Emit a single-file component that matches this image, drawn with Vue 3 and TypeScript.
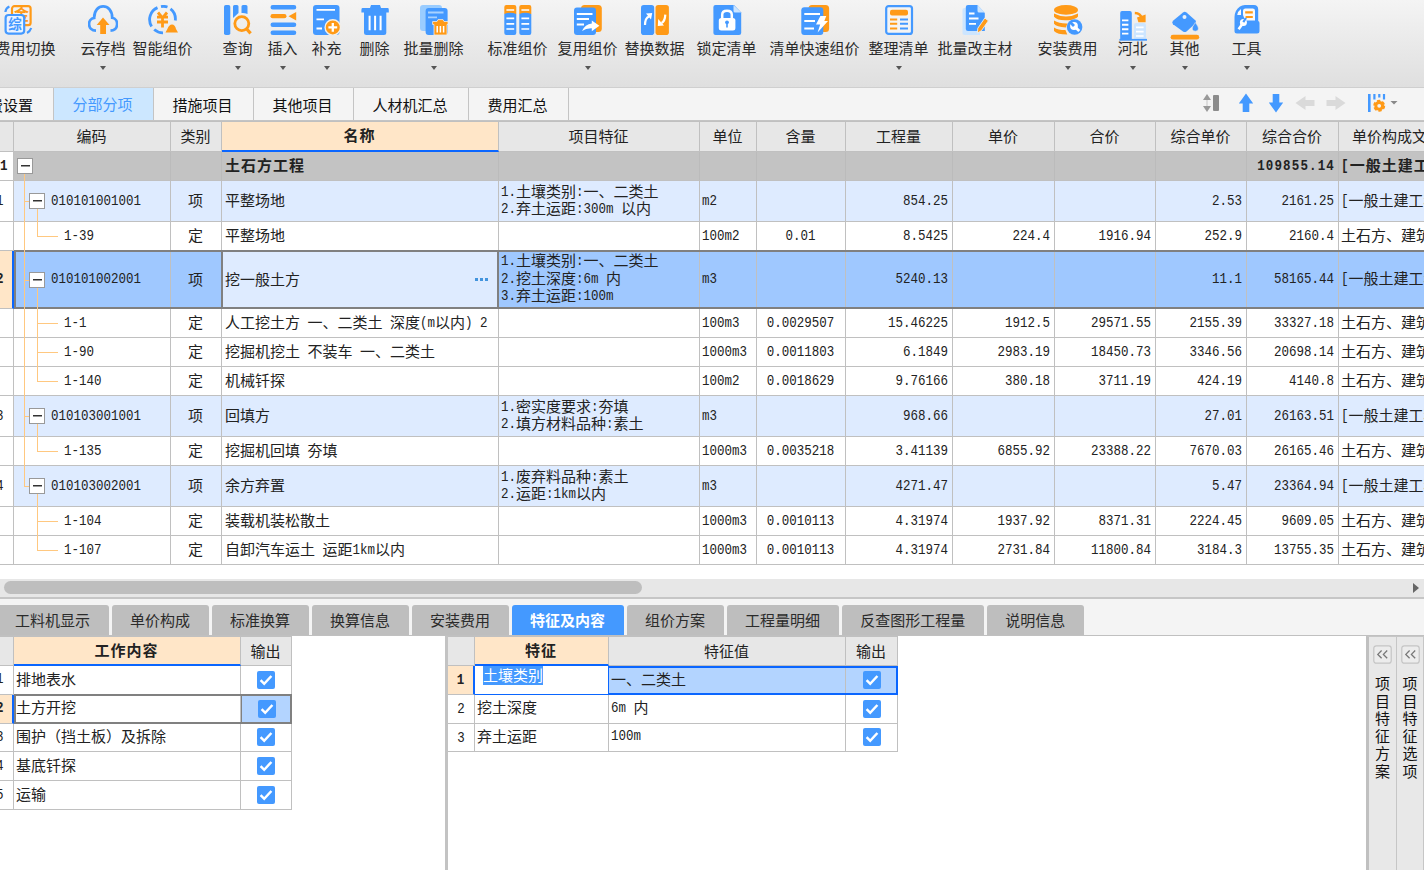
<script setup lang="ts">
import { h } from 'vue'

interface Tool { id: string; label: string; menu?: boolean }
interface Row {
  kind: 'section' | 'item' | 'quota'
  no?: string
  code?: string
  type?: string
  name: string
  feature?: string
  unit?: string
  nums: string[]
  file: string
  lastChild?: boolean
  lastGroup?: boolean
  selected?: boolean
}

/* Half-width characters take exactly half of a full-width cell. */
const Mixed = (props: { text: string }) =>
  h('span', { class: 'mixed' }, (props.text.match(/[\x20-\x7e]+|[^\x20-\x7e]+/g) ?? []).map((t) =>
    h('span', { class: /^[\x20-\x7e]/.test(t) ? 'half' : 'full' }, t),
  ))
Mixed.props = ['text']

const tools: Tool[] = [
  { id: 'fee', label: '费用切换' },
  { id: 'cloud', label: '云存档', menu: true },
  { id: 'smart', label: '智能组价' },
  { id: 'query', label: '查询', menu: true },
  { id: 'insert', label: '插入', menu: true },
  { id: 'supply', label: '补充', menu: true },
  { id: 'delete', label: '删除' },
  { id: 'batchdel', label: '批量删除', menu: true },
  { id: 'standard', label: '标准组价' },
  { id: 'reuse', label: '复用组价', menu: true },
  { id: 'replace', label: '替换数据' },
  { id: 'lock', label: '锁定清单' },
  { id: 'quick', label: '清单快速组价' },
  { id: 'arrange', label: '整理清单', menu: true },
  { id: 'material', label: '批量改主材' },
  { id: 'install', label: '安装费用', menu: true },
  { id: 'region', label: '河北', menu: true },
  { id: 'other', label: '其他', menu: true },
  { id: 'toolbox', label: '工具', menu: true },
]

const tabs = ['取费设置', '分部分项', '措施项目', '其他项目', '人材机汇总', '费用汇总']
const heads = ['', '编码', '类别', '名称', '项目特征', '单位', '含量', '工程量', '单价', '合价', '综合单价', '综合合价', '单价构成文件']

const civil = '[一般土建工程]'
const earth = '土石方、建筑工程'
const rows: Row[] = [
  { kind: 'section', no: '1', name: '土石方工程', nums: ['', '', '', '', '', '109855.14'], file: civil },
  { kind: 'item', no: '1', code: '010101001001', type: '项', name: '平整场地', feature: '1.土壤类别:一、二类土\n2.弃土运距:300m 以内', unit: 'm2', nums: ['', '854.25', '', '', '2.53', '2161.25'], file: civil },
  { kind: 'quota', code: '1-39', type: '定', name: '平整场地', unit: '100m2', nums: ['0.01', '8.5425', '224.4', '1916.94', '252.9', '2160.4'], file: earth, lastChild: true },
  { kind: 'item', no: '2', code: '010101002001', type: '项', name: '挖一般土方', feature: '1.土壤类别:一、二类土\n2.挖土深度:6m 内\n3.弃土运距:100m', unit: 'm3', nums: ['', '5240.13', '', '', '11.1', '58165.44'], file: civil, selected: true },
  { kind: 'quota', code: '1-1', type: '定', name: '人工挖土方 一、二类土 深度(m以内) 2', unit: '100m3', nums: ['0.0029507', '15.46225', '1912.5', '29571.55', '2155.39', '33327.18'], file: earth },
  { kind: 'quota', code: '1-90', type: '定', name: '挖掘机挖土 不装车 一、二类土', unit: '1000m3', nums: ['0.0011803', '6.1849', '2983.19', '18450.73', '3346.56', '20698.14'], file: earth },
  { kind: 'quota', code: '1-140', type: '定', name: '机械钎探', unit: '100m2', nums: ['0.0018629', '9.76166', '380.18', '3711.19', '424.19', '4140.8'], file: earth, lastChild: true },
  { kind: 'item', no: '3', code: '010103001001', type: '项', name: '回填方', feature: '1.密实度要求:夯填\n2.填方材料品种:素土', unit: 'm3', nums: ['', '968.66', '', '', '27.01', '26163.51'], file: civil },
  { kind: 'quota', code: '1-135', type: '定', name: '挖掘机回填 夯填', unit: '1000m3', nums: ['0.0035218', '3.41139', '6855.92', '23388.22', '7670.03', '26165.46'], file: earth, lastChild: true },
  { kind: 'item', no: '4', code: '010103002001', type: '项', name: '余方弃置', feature: '1.废弃料品种:素土\n2.运距:1km以内', unit: 'm3', nums: ['', '4271.47', '', '', '5.47', '23364.94'], file: civil, lastGroup: true },
  { kind: 'quota', code: '1-104', type: '定', name: '装载机装松散土', unit: '1000m3', nums: ['0.0010113', '4.31974', '1937.92', '8371.31', '2224.45', '9609.05'], file: earth, lastGroup: true },
  { kind: 'quota', code: '1-107', type: '定', name: '自卸汽车运土 运距1km以内', unit: '1000m3', nums: ['0.0010113', '4.31974', '2731.84', '11800.84', '3184.3', '13755.35'], file: earth, lastChild: true, lastGroup: true },
]

const detailTabs = ['工料机显示', '单价构成', '标准换算', '换算信息', '安装费用', '特征及内容', '组价方案', '工程量明细', '反查图形工程量', '说明信息']
const works = ['排地表水', '土方开挖', '围护（挡土板）及拆除', '基底钎探', '运输']
const features = [
  { name: '土壤类别', value: '一、二类土' },
  { name: '挖土深度', value: '6m 内' },
  { name: '弃土运距', value: '100m' },
]
const sidePanels = ['项目特征方案', '项目特征选项']
</script>

<template>
  <div class="app">
    <header class="toolbar">
      <div v-for="t in tools" :key="t.id" class="tool" :class="t.id">
        <svg class="icon" width="30" height="30" viewBox="0 0 30 30" fill="none">
          <g v-if="t.id === 'fee'">
            <rect x="9" y="1.2" width="18.6" height="19" rx="2.5" stroke="#ff9a17" stroke-width="2.2" />
            <text x="11" y="14.6" font-size="15" fill="#ff9a17" class="glyph">金</text>
            <rect x="2.6" y="10" width="18.6" height="18.6" rx="3" fill="#eaf3ff" stroke="#4499ff" stroke-width="2.2" />
            <text x="5.2" y="24" font-size="13.5" fill="#4499ff" class="glyph">综</text>
            <path d="M2.4 7Q2.8 3 6.4 1.4M24 28Q27 26.5 28.2 23" stroke="#4499ff" stroke-width="2.2" />
          </g>
          <g v-else-if="t.id === 'cloud'">
            <path d="M8 25.7C-.9 25.5-.9 13.8 6.2 12.8C6-2.4 24.3-2.4 24.2 12.8C31 14.2 31 25 22.5 25.7" stroke="#4499ff" stroke-width="2.7" />
            <path d="M15 12.5L21.5 20H18V29H12.2V20H8.7Z" fill="#ff9a17" />
          </g>
          <g v-else-if="t.id === 'smart'">
            <path d="M9.5 2.6A13 13 0 0 0 3.6 21.4M13 1.6A13 13 0 0 1 19.5 2M22.5 3.8A13 13 0 0 1 27.3 15.5M6.2 24.5A13 13 0 0 0 15 27.8" stroke="#4499ff" stroke-width="2.8" />
            <path d="M10 7.5L14.5 13L19 7.5M9 12.2H20M9 17H20M14.5 12V22.5" stroke="#ff9a17" stroke-width="2.8" />
            <path d="M17.5 27.5L19.4 24Q21 19.5 24 19.5T28 24L30 27.5Z" fill="#ff9a17" />
          </g>
          <g v-else-if="t.id === 'query'">
            <rect x="1" y="0" width="6.3" height="30" rx="1.8" fill="#4499ff" />
            <path d="M10 1.5Q10 0 11.5 0H14Q15.5 0 15.5 1.5V8L10 13ZM18.5 1.5Q18.5 0 20 0H23Q24.5 0 24.5 1.5V9Q21 7.5 18.5 8Z" fill="#4499ff" />
            <circle cx="18.8" cy="18.6" r="7" stroke="#ff9a17" stroke-width="2.8" />
            <path d="M23.5 23.8L27.6 28.4" stroke="#ff9a17" stroke-width="3.2" />
          </g>
          <g v-else-if="t.id === 'insert'">
            <path d="M4.8 2.3H26M4.8 19.8H26M4.8 27.7H26" stroke="#4499ff" stroke-width="4.6" stroke-linecap="round" />
            <path d="M4.6 11.2H16.4" stroke="#ff9a17" stroke-width="4.2" stroke-linecap="round" />
            <path d="M20.5 11.2L28.2 7V15.4Z" fill="#ff9a17" />
          </g>
          <g v-else-if="t.id === 'supply'">
            <rect x="1" y="0" width="26.5" height="30" rx="3" fill="#4499ff" />
            <path d="M4.5 4.8H23M4.5 14.4H12M4.5 23.5H10" stroke="#fff" stroke-width="1.8" />
            <circle cx="20.8" cy="22.4" r="7.7" fill="#ff9a17" stroke="#f3efe8" stroke-width="1.4" />
            <path d="M20.8 18V26.8M16.4 22.4H25.2" stroke="#fff" stroke-width="2.3" />
          </g>
          <g v-else-if="t.id === 'delete'">
            <path d="M10 3L11 0H20L21 3H28Q28.8 3 28.8 5V7.4H26.3V28Q26.3 30 24 30H6.4Q4 30 4 28V7.4H1.4V5Q1.4 3 2.4 3Z" fill="#4499ff" />
            <path d="M9.6 10.8V25.2M15.1 10.8V25.2M20.6 10.8V25.2" stroke="#fff" stroke-width="2" />
          </g>
          <g v-else-if="t.id === 'batchdel'">
            <rect x="1" y="0" width="22" height="26" rx="3" fill="#99ccff" />
            <rect x="6.6" y="3" width="22" height="27" rx="3" fill="#4499ff" />
            <path d="M9 7.5H24.5M9 12.3H18" stroke="#a8d2ff" stroke-width="1.8" />
            <path d="M13.6 19.5V16.5H18L19 14.6H24L25 16.5H29V19.5H28V30H15V19.5Z" fill="#ff9a17" stroke="#eee" stroke-width=".8" />
            <path d="M18.2 21V27.5M21.4 21V27.5M24.6 21V27.5" stroke="#fff" stroke-width="1.5" />
          </g>
          <g v-else-if="t.id === 'standard'">
            <path d="M1.3 9V2Q1.3 0 3.3 0H11.3Q13.3 0 13.3 2V9ZM16.3 9V2Q16.3 0 18.3 0H26.3Q28.3 0 28.3 2V9Z" fill="#ff9a17" />
            <path d="M1.3 9Q7 6.6 13.3 9V28Q13.3 30 11.3 30H3.3Q1.3 30 1.3 28ZM16.3 9Q22 6.6 28.3 9V28Q28.3 30 26.3 30H18.3Q16.3 30 16.3 28Z" fill="#4499ff" />
            <path d="M3.4 5H11.2M18.4 5H26.2M3.4 13.4H11.2M3.4 18.8H11.2M3.4 24H11.2M18.4 13.4H26.2M18.4 18.8H26.2M18.4 24H26.2" stroke="#fff" stroke-width="1.7" />
          </g>
          <g v-else-if="t.id === 'reuse'">
            <rect x="8" y="0" width="20.8" height="27" rx="3.5" fill="#ff9a17" />
            <rect x="1" y="2.6" width="22" height="27.4" rx="3" fill="#4499ff" />
            <path d="M3.8 9H19.5M3.8 14H16M3.8 19.5H11" stroke="#fff" stroke-width="1.8" />
            <path d="M9 26Q12 19 18.8 18.4V15.4L26.4 20.8L18.8 26.2V23.2Q13 23 9 26Z" fill="#fff" />
          </g>
          <g v-else-if="t.id === 'replace'">
            <rect x="1" y="0" width="13.2" height="30" rx="2.8" fill="#4499ff" />
            <rect x="15.5" y="0" width="13.4" height="30" rx="2.8" fill="#ff9a17" />
            <path d="M5 20Q5 13 9 11.4M25.3 9.6Q25 16.4 21.5 18" stroke="#fff" stroke-width="2.2" />
            <path d="M6 8.6L12.2 8L11 14.6ZM18.2 14L24 20.4L17.8 21Z" fill="#fff" />
          </g>
          <g v-else-if="t.id === 'lock'">
            <path d="M3.5 0H22L29.2 7.5V28Q29.2 30 27 30H3.5Q1.4 30 1.4 28V2Q1.4 0 3.5 0Z" fill="#4499ff" />
            <path d="M21.5 0L29.2 7.5H23Q21.5 7.5 21.5 6Z" fill="#cce5ff" />
            <rect x="6.8" y="13" width="16.6" height="12.5" rx="2.5" fill="#fff" />
            <path d="M10.2 13.5V9.8Q10.2 5.7 15 5.7T19.8 9.8V13.5" stroke="#fff" stroke-width="2.5" />
            <circle cx="15" cy="17.3" r="1.9" fill="#4499ff" />
            <path d="M15 17V22.4" stroke="#4499ff" stroke-width="1.6" />
          </g>
          <g v-else-if="t.id === 'quick'">
            <rect x="8.5" y="0" width="20.6" height="27" rx="3.5" fill="#ff9a17" />
            <rect x="1.3" y="2.2" width="22" height="27.8" rx="3" fill="#4499ff" />
            <path d="M4.3 9H20M4.3 16H15M4.3 23.5H14" stroke="#fff" stroke-width="1.9" />
            <path d="M20.4 11H26.3L24.3 16H28L17.6 27.5L20.2 19.6H16Z" fill="#fff" />
          </g>
          <g v-else-if="t.id === 'arrange'">
            <rect x="2.2" y="1.1" width="25.8" height="27.8" rx="2.5" fill="#f4f4f4" stroke="#4499ff" stroke-width="2.2" />
            <rect x="6" y="4.8" width="18" height="5.6" rx="2" fill="#ff9a17" />
            <path d="M6 14.4H13.2M6 18.8H13.2M6 23.6H13.2" stroke="#ff9a17" stroke-width="2" />
            <path d="M16 14.4H24M16 18.8H24M16 23.6H24" stroke="#4499ff" stroke-width="2" />
          </g>
          <g v-else-if="t.id === 'material'">
            <path d="M4.5 3H20V30H4.5Q2.5 30 2.5 28V5Q2.5 3 4.5 3Z" fill="#cce5ff" />
            <path d="M8 0H17.5L24.8 8V26H8Q5.8 26 5.8 24V2Q5.8 0 8 0Z" fill="#4499ff" />
            <path d="M17.5 0L24.8 7.5H19Q17.5 7.5 17.5 6Z" fill="#cce5ff" />
            <path d="M9 8.5H14.5M9 13.5H18.5M9 18.8H16" stroke="#fff" stroke-width="1.8" />
            <path d="M24.8 13L28.4 15.8L21.4 25.7L17.4 28L17.8 23.2Z" fill="#ff9a17" stroke="#e9f0f7" stroke-width=".9" />
          </g>
          <g v-else-if="t.id === 'install'">
            <ellipse cx="13" cy="4.9" rx="12" ry="4.9" fill="#ff9a17" />
            <path d="M1 8.4Q13 14.6 25 8.4V11.5Q23 14 18 14.9Q5 16.5 1 11.7ZM1 15.4Q6 18.6 14.5 18.4L12.8 22.4Q3.5 22 1 18.7ZM1 22.4Q5 25 12.4 25L14.3 29.6Q4 29.5 1 26Z" fill="#ff9a17" />
            <circle cx="21.6" cy="22" r="7.8" fill="#4499ff" />
            <circle cx="21" cy="21" r="3.9" fill="#fff" />
            <path d="M21.5 21.5L26.3 26" stroke="#fff" stroke-width="2.8" />
            <path d="M17.5 17.5L21 21" stroke="#4499ff" stroke-width="2.8" />
          </g>
          <g v-else-if="t.id === 'region'">
            <path d="M4 0H11.8Q13.8 0 13.8 2V28H2.2V2Q2.2 0 4 0Z" fill="#4499ff" />
            <path d="M4 9.4H10.4M4 13.8H10.4M4 18.2H10.4M4 22.6H10.4" stroke="#fff" stroke-width="1.9" />
            <path d="M18 12H26Q28 12 28 14V28H16V14Q16 12 18 12Z" fill="#cce5ff" />
            <path d="M18 16.4H25.6M18 20.6H25.6M18 25H25.6" stroke="#fff" stroke-width="1.6" />
            <path d="M1.4 28.8H29" stroke="#4499ff" stroke-width="1.8" />
            <path d="M16.8 2Q22.6 2.2 23.4 7" stroke="#ff9a17" stroke-width="2.6" />
            <path d="M19 6.4L27.6 3.4V11.2H20.4Z" fill="#ff9a17" />
          </g>
          <g v-else-if="t.id === 'other'">
            <path d="M3 9.8L13 1.4Q14.8.2 16.5 1.6L25.5 9.6Q26.6 11 25.4 12.4L16.5 20.4Q14.8 21.6 13 20.4L3 13.2Q1.4 11.5 3 9.8Z" fill="#4499ff" />
            <circle cx="14.5" cy="6" r="2" fill="#e8f1fb" />
            <path d="M25.3 11.5Q28.9 16.2 28.3 18.2Q27.7 20.2 25.3 20.2T22.3 18.2Q21.8 16 25.3 11.5Z" fill="#4499ff" stroke="#e8e8e8" stroke-width=".6" />
            <path d="M3 26.2H26.8" stroke="#ff9a17" stroke-width="4.8" stroke-linecap="round" />
          </g>
          <g v-else>
            <path d="M8 1.5Q10 0 13 0H22Q26.2 0 26.2 4.5V16Q27.5 16.5 27.5 18V26Q27.5 28.5 25 28.5H5Q2.5 28.5 2.5 26V12Q2.8 5 8 1.5Z" fill="#4499ff" />
            <path d="M5.2 10Q6 6 9 4V10ZM11 10V6Q11 3.4 13.5 3.4H20.6Q23 3.4 23 5.8V15.6H13.2Z" fill="#fafafa" />
            <path d="M13.2 7.4H20.8M13.6 12H20.8" stroke="#ff9a17" stroke-width="2.2" />
            <circle cx="11.4" cy="17.6" r="3.5" fill="#fff" />
            <path d="M10.7 18.6L6.6 24.3" stroke="#fff" stroke-width="2.6" />
            <path d="M14 13L11.3 17.2" stroke="#4499ff" stroke-width="2.2" />
          </g>
        </svg>
        <span class="label">{{ t.label }}</span>
        <i v-if="t.menu" class="caret" />
      </div>
    </header>

    <nav class="tabs">
      <span v-for="(t, i) in tabs" :key="t" class="tab" :class="{ active: i === 1 }">{{ t }}</span>
      <svg class="row-tools" width="200" height="22" viewBox="0 0 200 22" fill="none">
        <path d="M1 8L5 2L9 8ZM1 14L5 20L9 14Z" fill="#999" />
        <path d="M5 8V14" stroke="#ddd" stroke-width="2" />
        <rect x="11" y="3" width="6" height="16" rx="1" fill="#8c8c8c" />
        <path d="M44 1.5L51.2 11.5H47.3V20H40.7V11.5H36.8ZM74 20.5L81.2 10.5H77.3V2H70.7V10.5H66.8Z" fill="#4499ff" />
        <path d="M93.5 11L103.5 4V8H112.5V14H103.5V18ZM143.5 11L133.5 4V8H124.5V14H133.5V18Z" fill="#dadada" />
        <rect x="166" y="2" width="2.6" height="18" fill="#4499ff" />
        <path d="M172.4 2V7.5M177.3 2V5.5M182 2V7.5" stroke="#4499ff" stroke-width="2.2" />
        <circle cx="177.2" cy="13.8" r="3.4" stroke="#ff9a17" stroke-width="3" />
        <circle cx="177.2" cy="13.8" r="5" stroke="#ff9a17" stroke-width="2" stroke-dasharray="3.2 2" />
        <path d="M188.5 9H195.5L192 12.6Z" fill="#888" />
      </svg>
    </nav>

    <section class="sheet">
      <div class="line head">
        <div v-for="(t, i) in heads" :key="i" class="cell" :class="{ current: i === 3, clip: i === 12 }">{{ t }}</div>
      </div>
      <div v-for="(r, i) in rows" :key="i" class="line" :class="[r.kind, { selected: r.selected }]">
        <div class="cell no"><Mixed v-if="r.no" :text="r.no" /></div>
        <div class="cell code">
          <template v-if="r.kind === 'section'">
            <i class="rail from-root" /><i class="toggle" />
          </template>
          <template v-else>
            <i v-if="!(r.kind === 'quota' && r.lastGroup)" class="rail" :class="{ ends: r.lastGroup }" />
            <template v-if="r.kind === 'item'">
              <i class="tick" /><i class="stem" /><i class="toggle" />
            </template>
            <template v-else>
              <i class="branch" :class="{ ends: r.lastChild }" /><i class="arm" />
            </template>
            <Mixed :text="r.code ?? ''" />
          </template>
        </div>
        <div class="cell mid">{{ r.type }}</div>
        <div class="cell name"><Mixed :text="r.name" /><b v-if="r.selected" class="more"><i /><i /><i /></b></div>
        <div class="cell feature">
          <p v-for="f in (r.feature ?? '').split('\n')" :key="f"><Mixed :text="f" /></p>
        </div>
        <div class="cell unit"><Mixed :text="r.unit ?? ''" /></div>
        <div v-for="(n, k) in r.nums" :key="k" class="cell" :class="k === 0 ? 'mid' : 'num'"><Mixed :text="n" /></div>
        <div class="cell unit"><Mixed :text="r.file" /></div>
      </div>
    </section>

    <div class="scroll"><div class="thumb" /><i class="next" /></div>

    <nav class="detail-tabs">
      <span v-for="(t, i) in detailTabs" :key="t" class="dtab" :class="{ active: i === 5 }">{{ t }}</span>
    </nav>

    <main class="detail">
      <section class="works">
        <div class="line head">
          <div class="cell" /><div class="cell current">工作内容</div><div class="cell">输出</div>
        </div>
        <div v-for="(w, i) in works" :key="w" class="line" :class="{ selected: i === 1 }">
          <div class="cell no"><Mixed :text="String(i + 1)" /></div>
          <div class="cell name">{{ w }}</div>
          <div class="cell mid out">
            <svg width="18" height="18" viewBox="0 0 18 18"><rect width="18" height="18" rx="2" fill="#4499ff" /><path d="M3.6 9.2L7.2 12.8L14.4 5" fill="none" stroke="#fff" stroke-width="2.5" /></svg>
          </div>
        </div>
      </section>
      <section class="traits">
        <div class="line head">
          <div class="cell" /><div class="cell current">特征</div><div class="cell">特征值</div><div class="cell">输出</div>
        </div>
        <div v-for="(f, i) in features" :key="f.name" class="line" :class="{ editing: i === 0 }">
          <div class="cell no"><Mixed :text="String(i + 1)" /></div>
          <div class="cell name"><span>{{ f.name }}</span></div>
          <div class="cell value"><Mixed :text="f.value" /></div>
          <div class="cell mid out">
            <svg width="18" height="18" viewBox="0 0 18 18"><rect width="18" height="18" rx="2" fill="#4499ff" /><path d="M3.6 9.2L7.2 12.8L14.4 5" fill="none" stroke="#fff" stroke-width="2.5" /></svg>
          </div>
        </div>
      </section>
      <aside v-for="p in sidePanels" :key="p" class="side">
        <svg width="19" height="19" viewBox="0 0 19 19" fill="none"><rect x=".8" y=".8" width="17.4" height="17.4" rx="2.5" fill="#ececec" stroke="#c4c4c4" stroke-width="1.2" /><path d="M8.6 5.5L4.8 9.4L8.6 13.3M14.2 5.5L10.4 9.4L14.2 13.3" stroke="#777" stroke-width="1.3" /></svg>
        <span class="vertical">{{ p }}</span>
      </aside>
    </main>
  </div>
</template>

<style>
html, body { margin: 0; overflow: hidden; }
.mixed { white-space: pre; line-height: 17.5px; }
.half {
  display: inline-block; font-family: "Liberation Mono", monospace; font-size: 12.5px; line-height: 14px;
  white-space: pre; text-indent: 0; transform: translateY(-1.2px) scaleY(1.16);
}
</style>

<style scoped>
.app {
  width: 1424px; height: 870px; overflow: hidden;
  display: flex; flex-direction: column;
  background: #fff; color: #222;
  font: 15px/17.5px "Noto Sans CJK SC", sans-serif;
}
.app * { box-sizing: border-box; }

.toolbar {
  flex: none; height: 88px; padding-top: 5px; margin-left: -5.5px;
  display: grid;
  grid-template-columns: 86px 52px 90px 45px 44px 48px 44px 84px 70px 67px 72px 73px 99px 69px 100px 80px 52px 62px 40px;
  background: linear-gradient(#f4f4f4, #dfdfdf);
  border-bottom: 1px solid #cfcfcf;
}
.tool { width: max-content; display: flex; flex-direction: column; align-items: center; }
.tool.fee { margin-left: 1px; }
.icon { flex: none; }
.fee .icon { margin-right: 15px; }
.region .icon, .other .icon { margin: 6px 0 -6px; }
.glyph { font-family: "Noto Sans CJK SC", sans-serif; font-weight: 700; }
.label { margin-top: 4px; line-height: 18px; white-space: nowrap; color: #2b2b2b; position: relative; }
.caret { margin-top: 9px; border: 3.5px solid transparent; border-top: 4px solid #555; border-bottom: 0; }

.tabs { flex: none; height: 33px; display: flex; background: #f4f4f4; border-bottom: 1px solid #c4c4c4; }
.tab {
  flex: none; width: 100px; display: flex; align-items: center; justify-content: center;
  border-right: 1px solid #c4c4c4; white-space: nowrap; color: #111; padding: 2px 2px 0 0;
}
.tab:nth-child(1) { width: 54px; justify-content: flex-end; padding-right: 20px; }
.tab:nth-child(5) { width: 115px; }
.tab.active { background: #cce7ff; color: #4499ff; padding-top: 0; }
.row-tools { margin: 4px 22px 0 auto; }

.line { display: grid; height: 29px; }
.cell {
  display: flex; align-items: center; min-width: 0; overflow: hidden; padding: 0 0 2px 3px;
  white-space: nowrap; border-right: 1px solid #c0c0c0; border-bottom: 1px solid #c0c0c0;
}
.sheet { flex: none; height: 458px; border-top: 1px solid #c0c0c0; }
.sheet .line {
  width: 1444px; position: relative;
  grid-template-columns: 14px 157px 51px 277px 201px 57px 89px 107px 102px 101px 91px 92px 105px;
}
.head .cell { justify-content: center; padding: 0 1px 1px 0; background: #e7e7e7; }
.sheet .head { height: 30px; }
.sheet .head .clip { justify-content: flex-start; padding-left: 13px; }
.head .current { background: #ffe6c8; font-weight: 700; letter-spacing: 1px; border-bottom: 2px solid #0a66ff; }
.sheet .head .current { padding-bottom: 3px; }
.sheet .item { height: 41px; }
.sheet .selected { height: 58px; }
.item .cell { background: #deebff; }
.section .cell { background: #c3c3c3; font-weight: 700; letter-spacing: 1px; border-right-color: #bbb; }
.section :deep(.half) { letter-spacing: 1.15px; }
.line .cell.no { background: #fff; padding-left: 0; text-indent: -4px; border-right-color: #c0c0c0; }
.section .cell.no { text-indent: 0; }
.cell.mid { justify-content: center; padding: 0 1px 2px 0; }
.cell.num { justify-content: flex-end; padding: 0 4px 2px 0; }
.cell.unit { padding-left: 2px; }
.section .cell.num { padding-right: 3px; }
.cell.feature { flex-direction: column; align-items: flex-start; justify-content: center; padding: 0 0 4px 2px; }
.feature p { margin: 0; height: 17.5px; white-space: pre; }
.name { justify-content: space-between; }

.code { position: relative; padding-left: 37px; overflow: visible; }
.quota .code { padding-left: 50px; }
.rail, .branch, .stem { position: absolute; width: 1px; top: 0; bottom: -1px; background: #ffc880; z-index: 1; }
.rail { left: 10px; }
.rail.from-root { top: 50%; }
.rail.ends, .branch.ends { bottom: 50%; }
.branch, .stem { left: 23px; }
.stem { top: 50%; }
.tick, .arm { position: absolute; top: 50%; height: 1px; background: #ffc880; }
.tick { left: 10px; width: 6px; }
.arm { left: 23px; width: 21px; }
.toggle {
  position: absolute; z-index: 2; left: 15px; top: calc(50% - 8px); width: 16px; height: 16px;
  border: 1px solid #999; background: linear-gradient(#333, #333) center / 9px 1.5px no-repeat #fff;
}
.section .toggle { left: 3px; top: 6px; }

.sheet .selected .cell { background: #9fc8ff; }
.sheet .selected .cell.no { background: #ffe6c8; border-right: 2px solid #0a66ff; font-weight: 700; }
.sheet .selected::after {
  content: ""; position: absolute; left: 14px; right: 0; top: -1px; bottom: 0; border: 2px solid #808080;
}
.sheet .selected .name { background: #deebff; border: solid #808080; border-width: 0 2px 0 2px; margin-left: -1px; padding-left: 2px; }
.more { display: flex; gap: 2px; margin-right: 9px; }
.more i { width: 3px; height: 3px; background: #4294dd; }

.scroll {
  flex: none; height: 20px; display: flex; justify-content: space-between; align-items: center;
  padding: 0 5px 1px 4px; background: #e7e7e7; border-bottom: 2px solid #c6c6c6;
}
.thumb { width: 638px; height: 13px; border-radius: 7px; background: #bebebe; }
.next { border: 5px solid transparent; border-left: 6px solid #666; border-right: 0; }

.detail-tabs {
  flex: none; height: 37px; padding-top: 6px; margin-left: -3px; display: flex; gap: 3px;
  background: #f4f4f4; border-bottom: 1px solid #c0c0c0;
}
.dtab { padding: 0 19px 0 18px; line-height: 29px; border-radius: 3px 3px 0 0; background: #bebebe; color: #2b2b2b; white-space: nowrap; }
.dtab.active { background: #4499ff; color: #fff; font-weight: 700; }

.detail { flex: 1; display: flex; min-height: 0; }
.works { width: 448px; border-right: 3px solid #c3c3c3; }
.works .line { grid-template-columns: 14px 227px 51px; width: 292px; height: 28.8px; position: relative; }
.works .selected .no { background: #ffe6c8; border-right: 2px solid #0a66ff; font-weight: 700; }
.works .selected::after { content: ""; position: absolute; left: 14px; right: 0; top: -1px; bottom: 0; border: 2px solid #808080; }
.works .name { padding-left: 2px; padding-bottom: 3px; }
.works .selected .out { background: #b3d4ff; border-left: 1px solid #808080; }
.detail .cell.out { padding: 0; }
.traits { flex: 1; }
.traits .line { grid-template-columns: 27px 134px 237px 52px; width: 450px; height: 28.8px; position: relative; }
.detail .line.head { height: 30px; border-top: 1px solid #c0c0c0; }
.traits .cell.no { justify-content: center; text-indent: 0; padding-bottom: 0; }
.traits .name, .traits .value { padding-left: 2px; padding-bottom: 3px; }
.editing .cell { background: #b3d4ff; }
.traits .editing .cell.no { background: #ffe6c8; border-right: 2px solid #0a66ff; font-weight: 700; }
.traits .editing .cell.name { background: #fff; align-items: flex-start; padding: 0 0 0 8px; border-right: 1px solid #0a66ff; border-bottom: 1px solid #0a66ff; }
.editing .name span { background: #4499ff; color: #fff; line-height: 18px; height: 19px; }
.traits .editing::after { content: ""; position: absolute; left: 160px; right: 0; top: 0; bottom: 0; border: 2px solid #0a66ff; border-left: 0; }
.side {
  width: 27px; padding-top: 8px; display: flex; flex-direction: column; align-items: center;
  background: #e8e8e8; border-right: 1px solid #c6c6c6; border-top: 1px solid #c6c6c6;
}
.traits + .side { width: 31px; border-left: 3px solid #c0c0c0; }
.vertical { width: 15px; margin-top: 10px; line-height: 17.6px; white-space: normal; word-break: break-all; color: #111; }
</style>
